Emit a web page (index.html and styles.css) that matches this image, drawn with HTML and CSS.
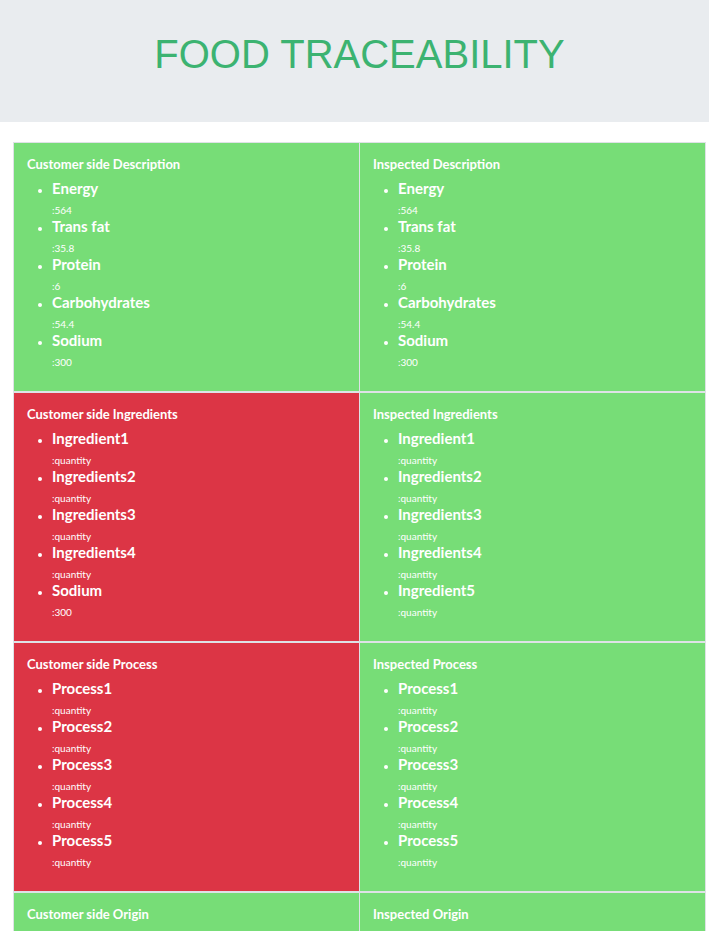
FILE: index.html
```html
<!DOCTYPE html>
<html>
<head>
<meta charset="utf-8">
<link rel="stylesheet" href="styles.css">
</head>
<body>
<header class="banner"><h1 class="title">FOOD TRACEABILITY</h1></header>
<main class="grid">
  <section class="cell ok">
    <h2 class="cell-title">Customer side Description</h2>
    <ul class="items">
      <li><span class="name">Energy</span><span class="val">:564</span></li>
      <li><span class="name">Trans fat</span><span class="val">:35.8</span></li>
      <li><span class="name">Protein</span><span class="val">:6</span></li>
      <li><span class="name">Carbohydrates</span><span class="val">:54.4</span></li>
      <li><span class="name">Sodium</span><span class="val">:300</span></li>
    </ul>
  </section>
  <section class="cell ok">
    <h2 class="cell-title">Inspected Description</h2>
    <ul class="items">
      <li><span class="name">Energy</span><span class="val">:564</span></li>
      <li><span class="name">Trans fat</span><span class="val">:35.8</span></li>
      <li><span class="name">Protein</span><span class="val">:6</span></li>
      <li><span class="name">Carbohydrates</span><span class="val">:54.4</span></li>
      <li><span class="name">Sodium</span><span class="val">:300</span></li>
    </ul>
  </section>
  <section class="cell bad">
    <h2 class="cell-title">Customer side Ingredients</h2>
    <ul class="items">
      <li><span class="name">Ingredient1</span><span class="val">:quantity</span></li>
      <li><span class="name">Ingredients2</span><span class="val">:quantity</span></li>
      <li><span class="name">Ingredients3</span><span class="val">:quantity</span></li>
      <li><span class="name">Ingredients4</span><span class="val">:quantity</span></li>
      <li><span class="name">Sodium</span><span class="val">:300</span></li>
    </ul>
  </section>
  <section class="cell ok">
    <h2 class="cell-title">Inspected Ingredients</h2>
    <ul class="items">
      <li><span class="name">Ingredient1</span><span class="val">:quantity</span></li>
      <li><span class="name">Ingredients2</span><span class="val">:quantity</span></li>
      <li><span class="name">Ingredients3</span><span class="val">:quantity</span></li>
      <li><span class="name">Ingredients4</span><span class="val">:quantity</span></li>
      <li><span class="name">Ingredient5</span><span class="val">:quantity</span></li>
    </ul>
  </section>
  <section class="cell bad">
    <h2 class="cell-title">Customer side Process</h2>
    <ul class="items">
      <li><span class="name">Process1</span><span class="val">:quantity</span></li>
      <li><span class="name">Process2</span><span class="val">:quantity</span></li>
      <li><span class="name">Process3</span><span class="val">:quantity</span></li>
      <li><span class="name">Process4</span><span class="val">:quantity</span></li>
      <li><span class="name">Process5</span><span class="val">:quantity</span></li>
    </ul>
  </section>
  <section class="cell ok">
    <h2 class="cell-title">Inspected Process</h2>
    <ul class="items">
      <li><span class="name">Process1</span><span class="val">:quantity</span></li>
      <li><span class="name">Process2</span><span class="val">:quantity</span></li>
      <li><span class="name">Process3</span><span class="val">:quantity</span></li>
      <li><span class="name">Process4</span><span class="val">:quantity</span></li>
      <li><span class="name">Process5</span><span class="val">:quantity</span></li>
    </ul>
  </section>
  <section class="cell ok tail">
    <h2 class="cell-title">Customer side Origin</h2>
  </section>
  <section class="cell ok tail">
    <h2 class="cell-title">Inspected Origin</h2>
  </section>
</main>
</body>
</html>
```
FILE: styles.css
```css
html, body {
  margin: 0;
  padding: 0;
  background: #ffffff;
}
body {
  font-family: Lato, "Open Sans", sans-serif;
  color: #ffffff;
}
.banner {
  background: #e9ecef;
  height: 122px;
  display: flex;
  align-items: center;
  justify-content: center;
}
.title {
  margin: 0 0 14px 10px;
  font-family: "Liberation Sans", Arial, sans-serif;
  font-weight: 400;
  font-size: 40px;
  line-height: 46px;
  color: #3cb371;
}
.grid {
  display: grid;
  grid-template-columns: 1fr 1fr;
  column-gap: 1px;
  row-gap: 2px;
  background: #dee2e6;
  padding: 1px;
  margin: 20px 3px 0 13px;
}
.cell {
  padding: 12px 13px 12px 13px;
}
.ok { background: #77dd77; }
.bad { background: #dc3545; }
.tail { padding-bottom: 40px; }
.cell-title {
  margin: 0;
  font-size: 13px;
  line-height: 18px;
  font-weight: 700;
}
.items {
  margin: 4px 0 12px 0;
  padding-left: 25px;
}
.items li {
  list-style: disc;
  font-size: 11px;
}
.items li::marker {
  font-size: 11px;
}
.name {
  display: block;
  font-size: 15px;
  line-height: 22px;
  font-weight: 700;
}
.val {
  display: block;
  font-size: 10px;
  line-height: 16px;
  padding-top: 3px;
  margin-bottom: -3px;
}
```
